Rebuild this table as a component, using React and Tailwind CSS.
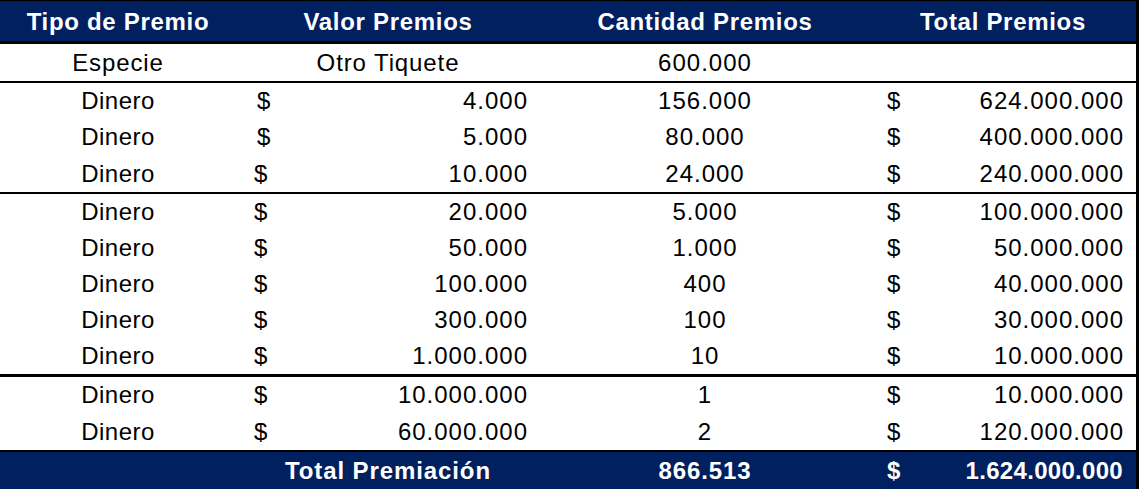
import React from "react";

const navy = "bg-[#002060]";

const group1 = [
  { v: "4.000", q: "156.000", t: "624.000.000", shift: true },
  { v: "5.000", q: "80.000", t: "400.000.000", shift: true },
  { v: "10.000", q: "24.000", t: "240.000.000", last: true },
];
const group2 = [
  { v: "20.000", q: "5.000", t: "100.000.000" },
  { v: "50.000", q: "1.000", t: "50.000.000" },
  { v: "100.000", q: "400", t: "40.000.000" },
  { v: "300.000", q: "100", t: "30.000.000" },
  { v: "1.000.000", q: "10", t: "10.000.000" },
];
const group3 = [
  { v: "10.000.000", q: "1", t: "10.000.000" },
  { v: "60.000.000", q: "2", t: "120.000.000", last: true },
];

function Row({ r }) {
  return (
    <div
      className={`grid grid-cols-[236px_304px_330px_266px] items-center ${
        r.last ? "h-[37px]" : "h-[36px]"
      }`}
    >
      <div className="text-center tracking-[0.5px]">Dinero</div>
      <div className="flex justify-between items-center">
        <span className={r.shift ? "pl-[21px]" : "pl-[18px]"}>$</span>
        <span className="pr-[12px] tracking-[1px]">{r.v}</span>
      </div>
      <div className="text-center tracking-[1px]">{r.q}</div>
      <div className="flex justify-between items-center">
        <span className="pl-[17px]">$</span>
        <span className="pr-[12px] tracking-[1px]">{r.t}</span>
      </div>
    </div>
  );
}

export default function App() {
  return (
    <div
      className="w-[1139px] h-[489px] bg-white text-black text-[24px] leading-none overflow-hidden"
      style={{ fontFamily: '"Liberation Sans", Arial, sans-serif' }}
    >
      <div className="w-[1139px] border-r-[3px] border-black">
        <div
          className={`grid grid-cols-[236px_304px_330px_266px] items-center h-[44px] ${navy} text-white font-bold tracking-[0.7px] border-t border-b-[3px] border-black`}
        >
          <div className="text-center pt-[1px]">Tipo de Premio</div>
          <div className="text-center pt-[1px]">Valor Premios</div>
          <div className="text-center pt-[1px]">Cantidad Premios</div>
          <div className="text-center pt-[1px]">Total Premios</div>
        </div>
        <div className="grid grid-cols-[236px_304px_330px_266px] items-center h-[39px] border-b-2 border-black tracking-[0.9px]">
          <div className="text-center">Especie</div>
          <div className="text-center">Otro Tiquete</div>
          <div className="text-center tracking-[1px]">600.000</div>
          <div></div>
        </div>
        <div className="border-b-2 border-black">
          {group1.map((r, i) => (
            <Row key={i} r={r} />
          ))}
        </div>
        <div className="border-b-[3px] border-black">
          {group2.map((r, i) => (
            <Row key={i} r={r} />
          ))}
        </div>
        <div className="border-b-2 border-black">
          {group3.map((r, i) => (
            <Row key={i} r={r} />
          ))}
        </div>
        <div
          className={`grid grid-cols-[236px_304px_330px_266px] items-center h-[37px] ${navy} text-white font-bold tracking-[0.9px]`}
        >
          <div></div>
          <div className="text-center">Total Premiación</div>
          <div className="text-center">866.513</div>
          <div className="flex justify-between items-center">
            <span className="pl-[17px]">$</span>
            <span className="pr-[13px] tracking-[0.3px]">1.624.000.000</span>
          </div>
        </div>
      </div>
    </div>
  );
}
